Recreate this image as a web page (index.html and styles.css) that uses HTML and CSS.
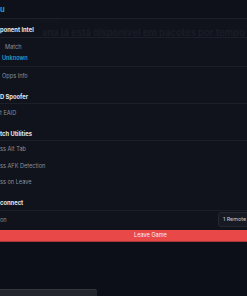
FILE: index.html
```html
<!DOCTYPE html>
<html>
<head>
<meta charset="utf-8">
<link rel="stylesheet" href="styles.css">
</head>
<body>
<div class="page">
  <div class="top"><span class="title">u</span></div>

  <div class="head h1">ponent Intel</div>
  <div class="row r-match"><span class="muted">Match</span></div>
  <div class="row r-val"><span class="accent">Unknown</span></div>
  <div class="row r-opps"><span class="muted">Opps Info</span></div>

  <div class="head h2">D Spoofer</div>
  <div class="row r-eaid"><span class="muted">t EAID</span></div>

  <div class="head h3">tch Utilities</div>
  <div class="row r-item"><span class="muted">ss Alt Tab</span></div>
  <div class="row r-item"><span class="muted">ss AFK Detection</span></div>
  <div class="row r-item"><span class="muted">ss on Leave</span></div>

  <div class="head h4">connect</div>
  <div class="row r-remote"><span class="muted">on</span><button class="remote">1 Remote</button></div>

  <div class="leave"><span>Leave Game</span></div>

  <div class="bottom"><div class="tab"></div></div>

  <div class="ghost-note">is to be recall.</div>
  <div class="ghost">ana já está disponível em pacotes por tempo</div>
</div>
</body>
</html>
```

FILE: styles.css
```css
* { box-sizing: border-box; }
html, body {
  margin: 0;
  padding: 0;
  background: #10131b;
  overflow: hidden;
}
body {
  width: 247px;
  height: 296px;
  font-family: Inter, "Noto Sans", sans-serif;
  font-size: 5.6px;
}
.page {
  position: relative;
  display: flex;
  flex-direction: column;
  width: 247px;
  height: 296px;
  overflow: hidden;
}
.top {
  height: 19px;
  background: #0e1119;
  border-bottom: 1px solid #1c2029;
  padding-top: 6px;
  line-height: 8px;
}
.title {
  color: #1fa3d0;
  font-weight: 700;
  font-size: 7.5px;
}
.head {
  display: flex;
  align-items: flex-end;
  color: #e4e6ec;
  font-weight: 700;
  font-size: 5.8px;
  line-height: 8px;
  border-bottom: 1px solid #1b1f28;
}
.h1 { height: 19px; padding-bottom: 3px; }
.h2 { height: 20px; padding-bottom: 2px; }
.h3 { height: 19px; padding-bottom: 2px; }
.h4 { height: 20px; padding-bottom: 3px; }
.row {
  display: flex;
  align-items: center;
  line-height: 8px;
}
.muted { color: #8b909c; }
.accent { color: #1fa3d0; font-weight: 600; }
.r-match { height: 15px; padding-left: 5px; padding-top: 3px; }
.r-val { height: 14px; padding-left: 2px; padding-bottom: 3px; border-bottom: 1px solid #1b1f28; }
.r-opps { height: 17px; padding-left: 2px; }
.r-eaid { height: 18px; }
.r-item { height: 16.5px; }
.r-remote {
  height: 19px;
  justify-content: space-between;
  padding-bottom: 1px;
}
.remote {
  width: 32px;
  height: 15px;
  margin-right: -3px;
  padding: 0 0 0 4px;
  text-align: left;
  white-space: nowrap;
  background: #171a23;
  border: 1px solid #232731;
  border-radius: 3px;
  color: #c7cad2;
  font-family: inherit;
  font-size: 5.4px;
  line-height: 13px;
}
.leave {
  height: 12px;
  background: #e84848;
  border-bottom: 1px solid #a8373a;
  color: #fbeeee;
  line-height: 11px;
  padding-left: 134px;
}
.bottom {
  flex: 1;
  background: #0c0f17;
  display: flex;
  align-items: flex-end;
}
.tab {
  width: 97px;
  height: 7px;
  background: #24262e;
  border-top: 1px solid #34363e;
  border-top-right-radius: 2px;
}
.ghost {
  position: absolute;
  left: 42px;
  top: 27px;
  white-space: nowrap;
  color: #191d27;
  font-weight: 700;
  font-size: 9.4px;
  line-height: 12px;
}
.ghost-note {
  position: absolute;
  left: 36px;
  top: 18px;
  color: #161a23;
  font-size: 4px;
  white-space: nowrap;
}
```
